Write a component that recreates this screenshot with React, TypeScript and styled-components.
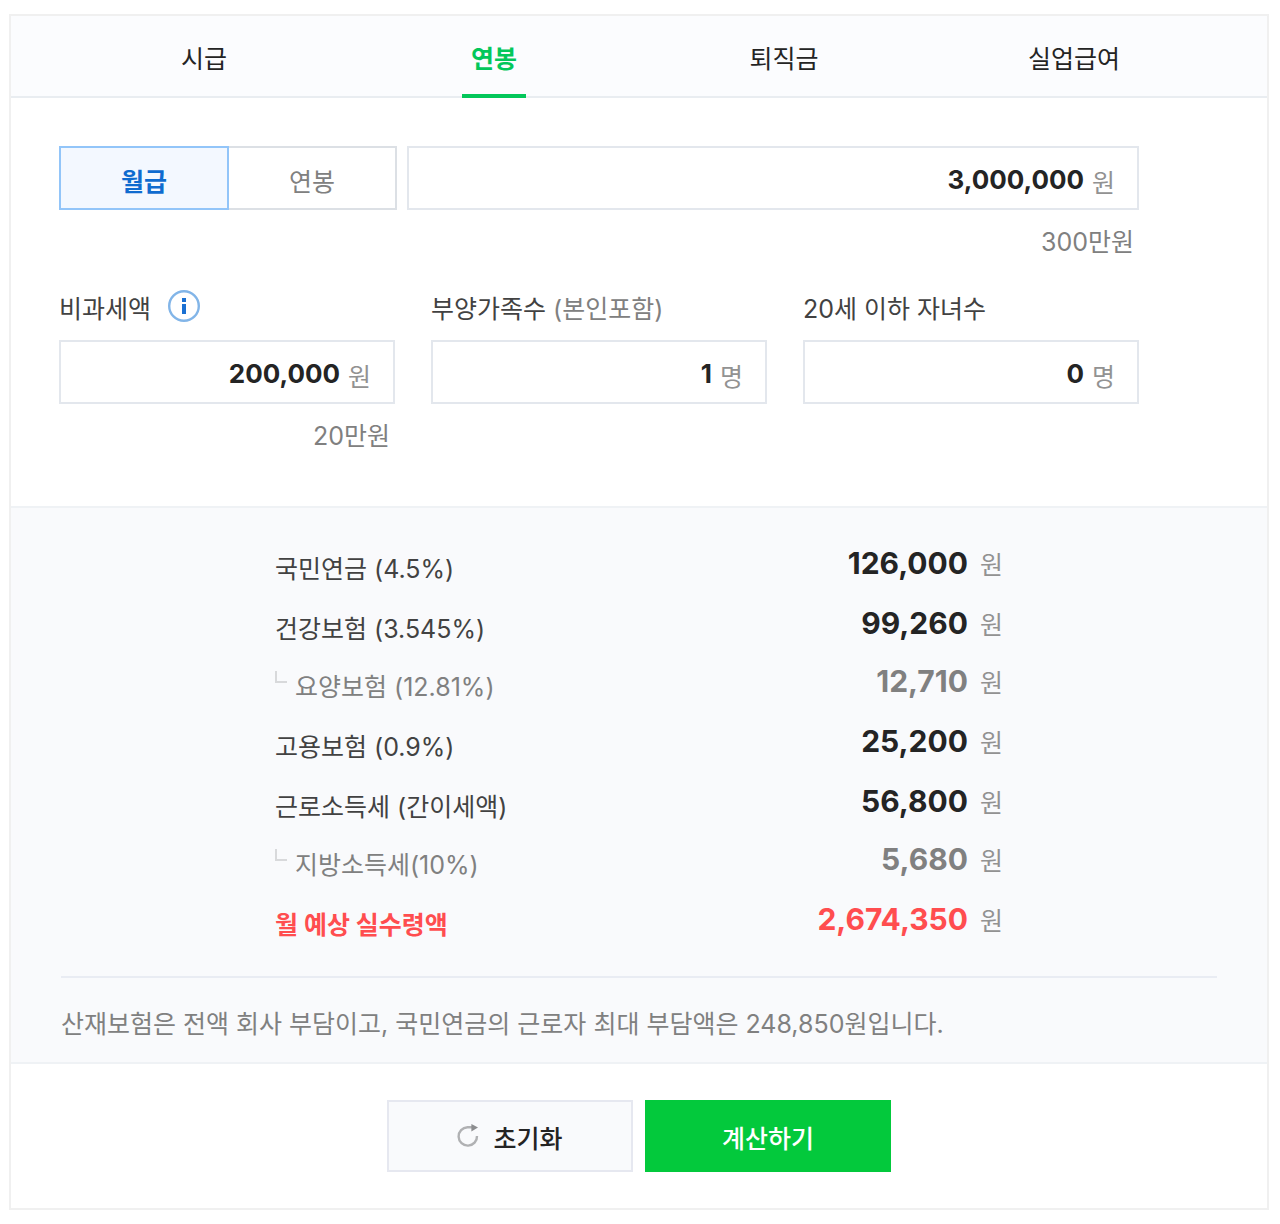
import React, { useState } from "react";
import styled, { createGlobalStyle, css } from "styled-components";

const GlobalStyle = createGlobalStyle`
  *, *::before, *::after { box-sizing: border-box; }
  body {
    margin: 0;
    background: #fff;
    color: #424242;
    font-family: Inter, "Noto Sans CJK KR", sans-serif;
    font-size: 25px;
    line-height: 32px;
  }
  button, input { font: inherit; color: inherit; }
  button { cursor: pointer; }
`;

const Card = styled.main`
  margin: 14px 11px 14px 9px;
  border: 2px solid #f0f0f0;
`;

const Tabs = styled.div`
  display: flex;
  height: 82px;
  padding: 0 48px;
  background: #fbfcfe;
  box-shadow: inset 0 -2px #e9edf1;
`;

const TabCell = styled.div`
  flex: 1;
  display: flex;
  justify-content: center;
`;

const Tab = styled.button<{ $active: boolean }>`
  padding: 8px 9px 0;
  border: 0;
  border-bottom: 4px solid transparent;
  background: none;
  color: #242424;
  ${({ $active }) =>
    $active &&
    css`
      border-bottom-color: #03c75a;
      color: #03c75a;
      font-weight: 700;
    `}
`;

const Form = styled.form`
  max-width: 1176px;
  padding: 48px 48px 54px;
`;

const AmountRow = styled.div`
  display: flex;
  gap: 10px;
`;

const Toggle = styled.div`
  display: flex;
  flex: 0 0 338px;
`;

const ToggleButton = styled.button<{ $active: boolean }>`
  flex: 1;
  height: 64px;
  padding: 8px 0 0;
  border: 2px solid #dce0e5;
  background: #fff;
  color: #808080;
  & + & {
    margin-left: -2px;
  }
  ${({ $active }) =>
    $active &&
    css`
      z-index: 1;
      border-color: #92c5f9;
      background: #f3f8ff;
      color: #0f6bcf;
      font-weight: 700;
    `}
`;

const Field = styled.div`
  flex: 1;
  min-width: 0;
`;

const Box = styled.div`
  display: flex;
  align-items: center;
  gap: 8px;
  height: 64px;
  padding: 8px 22px 0 16px;
  border: 2px solid #e3e7ed;
  background: #fff;
`;

const NumberInput = styled.input`
  flex: 1;
  min-width: 0;
  padding: 0 0 4px;
  border: 0;
  outline: 0;
  background: none;
  color: #242424;
  font-size: 26px;
  font-weight: 700;
  text-align: right;
`;

const Unit = styled.span`
  padding-top: 2px;
  color: #929292;
`;

const Hint = styled.p`
  margin: 16px 0 0;
  padding-right: 5px;
  color: #808080;
  text-align: right;
`;

const DetailRow = styled.div`
  display: flex;
  gap: 36px;
  margin-top: 30px;
`;

const LabelLine = styled.div`
  display: flex;
  align-items: center;
  gap: 17px;
  height: 36px;
  margin-bottom: 16px;
  label {
    padding-top: 6px;
  }
`;

const Muted = styled.span`
  color: #808080;
`;

const InfoButton = styled.button`
  display: flex;
  padding: 0;
  border: 0;
  background: none;
`;

const Results = styled.section`
  padding: 39px 48px 22px;
  border: solid #eff2f5;
  border-width: 2px 0;
  background: #f9fafc;
`;

const Lines = styled.dl`
  max-width: 728px;
  margin: 0 auto;
  padding-bottom: 36px;
`;

const Line = styled.div<{ $kind?: "sub" | "total" }>`
  display: flex;
  justify-content: space-between;
  height: 60px;
  --value: #242424;
  ${({ $kind }) =>
    $kind === "sub" &&
    css`
      margin-top: -2px;
      color: #808080;
      --value: #808080;
    `}
  ${({ $kind }) =>
    $kind === "total" &&
    css`
      height: 37px;
      color: #ff4d4f;
      --value: #ff4d4f;
      font-weight: 700;
    `}
`;

const Term = styled.dt`
  display: flex;
  gap: 8px;
  padding-top: 6px;
`;

const Branch = styled.span`
  width: 12px;
  height: 12px;
  border: solid #d8d9db;
  border-width: 0 0 2px 2px;
`;

const Value = styled.dd`
  display: flex;
  gap: 12px;
  margin: 0;
  color: var(--value);
  font-size: 30px;
  font-weight: 700;
  ${Unit} {
    font-size: 25px;
    font-weight: 400;
  }
`;

const Note = styled.p`
  margin: 0 2px;
  padding-top: 30px;
  border-top: 2px solid #e9ecf3;
  color: #808080;
`;

const Actions = styled.div`
  display: flex;
  justify-content: center;
  gap: 12px;
  padding: 36px 48px;
`;

const ActionButton = styled.button<{ $primary?: boolean }>`
  display: flex;
  align-items: center;
  justify-content: center;
  gap: 14px;
  width: 246px;
  height: 72px;
  padding: 6px 0 0;
  border: 2px solid ${({ $primary }) => ($primary ? "#03c93c" : "#e6e8f0")};
  background: ${({ $primary }) => ($primary ? "#03c93c" : "#f9fafc")};
  color: ${({ $primary }) => ($primary ? "#fff" : "#242424")};
  font-weight: 500;
  svg {
    margin-bottom: 6px;
  }
`;

const InfoIcon = () => (
  <svg width="32" height="32" viewBox="0 0 32 32" aria-hidden="true">
    <circle cx="16" cy="16" r="14.8" fill="#fff" stroke="#82b5e8" strokeWidth="2.4" />
    <path d="M14 8h4v4h-4zM14 14h4v10h-4z" fill="#1a70d2" />
  </svg>
);

const ResetIcon = () => (
  <svg width="22" height="24" viewBox="0 0 22 24" aria-hidden="true">
    <path d="M15 3.2H10.5A9.2 9.2 0 1 0 20 12" fill="none" stroke="#b0b1b3" strokeWidth="2.4" />
    <path d="M14.4 0L21 3.4L14.4 7.4Z" fill="#8c8d8f" />
  </svg>
);

const tabs = ["시급", "연봉", "퇴직금", "실업급여"];

const lines: { label: string; value: string; kind?: "sub" | "total" }[] = [
  { label: "국민연금 (4.5%)", value: "126,000" },
  { label: "건강보험 (3.545%)", value: "99,260" },
  { label: "요양보험 (12.81%)", value: "12,710", kind: "sub" },
  { label: "고용보험 (0.9%)", value: "25,200" },
  { label: "근로소득세 (간이세액)", value: "56,800" },
  { label: "지방소득세(10%)", value: "5,680", kind: "sub" },
  { label: "월 예상 실수령액", value: "2,674,350", kind: "total" },
];

export default function App() {
  const [tab, setTab] = useState("연봉");
  const [period, setPeriod] = useState("월급");

  return (
    <>
      <GlobalStyle />
      <Card>
        <Tabs role="tablist">
          {tabs.map((name) => (
            <TabCell key={name} role="presentation">
              <Tab
                type="button"
                role="tab"
                aria-selected={tab === name}
                $active={tab === name}
                onClick={() => setTab(name)}
              >
                {name}
              </Tab>
            </TabCell>
          ))}
        </Tabs>

        <Form id="salary" onSubmit={(e) => e.preventDefault()}>
          <AmountRow>
            <Toggle>
              {["월급", "연봉"].map((name) => (
                <ToggleButton
                  key={name}
                  type="button"
                  aria-pressed={period === name}
                  $active={period === name}
                  onClick={() => setPeriod(name)}
                >
                  {name}
                </ToggleButton>
              ))}
            </Toggle>
            <Field>
              <Box>
                <NumberInput aria-label={period} inputMode="numeric" defaultValue="3,000,000" />
                <Unit>원</Unit>
              </Box>
              <Hint>300만원</Hint>
            </Field>
          </AmountRow>

          <DetailRow>
            <Field>
              <LabelLine>
                <label htmlFor="taxfree">비과세액</label>
                <InfoButton type="button" aria-label="비과세액 안내">
                  <InfoIcon />
                </InfoButton>
              </LabelLine>
              <Box>
                <NumberInput id="taxfree" inputMode="numeric" defaultValue="200,000" />
                <Unit>원</Unit>
              </Box>
              <Hint>20만원</Hint>
            </Field>
            <Field>
              <LabelLine>
                <label htmlFor="family">
                  부양가족수 <Muted>(본인포함)</Muted>
                </label>
              </LabelLine>
              <Box>
                <NumberInput id="family" inputMode="numeric" defaultValue="1" />
                <Unit>명</Unit>
              </Box>
            </Field>
            <Field>
              <LabelLine>
                <label htmlFor="children">20세 이하 자녀수</label>
              </LabelLine>
              <Box>
                <NumberInput id="children" inputMode="numeric" defaultValue="0" />
                <Unit>명</Unit>
              </Box>
            </Field>
          </DetailRow>
        </Form>

        <Results>
          <Lines>
            {lines.map(({ label, value, kind }) => (
              <Line key={label} $kind={kind}>
                <Term>
                  {kind === "sub" && <Branch />}
                  {label}
                </Term>
                <Value>
                  {value}
                  <Unit>원</Unit>
                </Value>
              </Line>
            ))}
          </Lines>
          <Note>산재보험은 전액 회사 부담이고, 국민연금의 근로자 최대 부담액은 248,850원입니다.</Note>
        </Results>

        <Actions>
          <ActionButton type="reset" form="salary">
            <ResetIcon />
            초기화
          </ActionButton>
          <ActionButton type="submit" form="salary" $primary>
            계산하기
          </ActionButton>
        </Actions>
      </Card>
    </>
  );
}
